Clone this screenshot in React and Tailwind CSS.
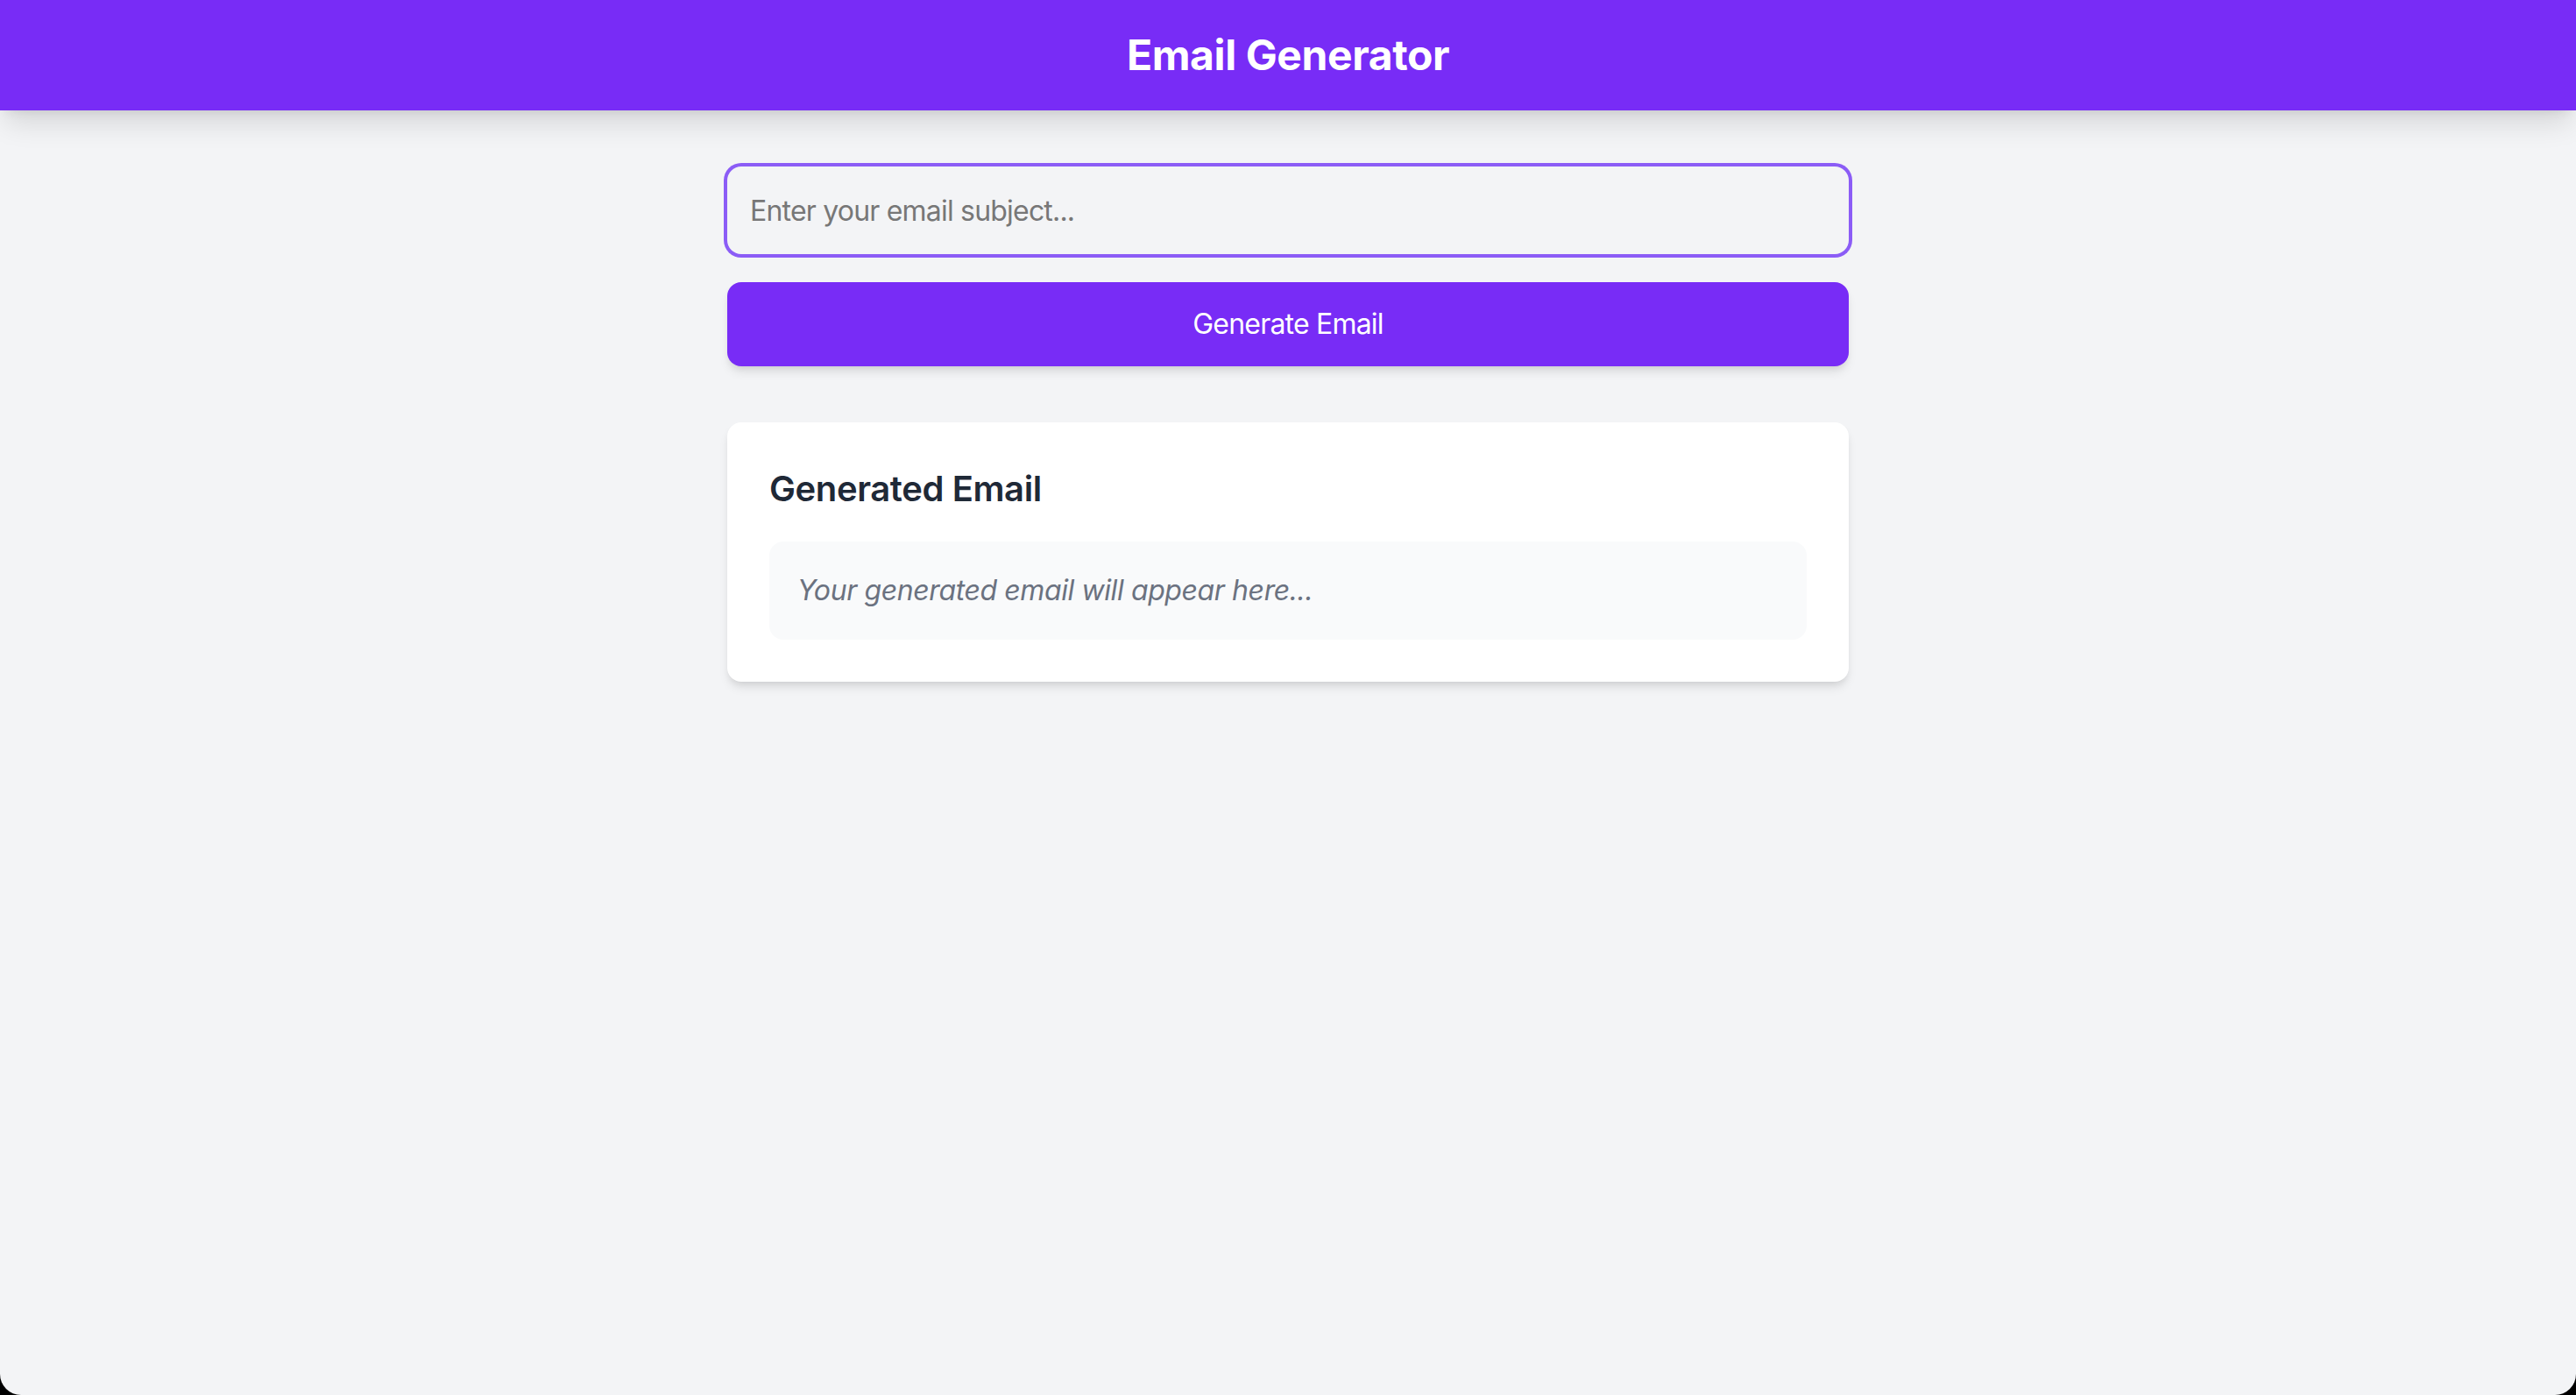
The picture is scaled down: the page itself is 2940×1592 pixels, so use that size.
import { useState } from 'react'

export default function App() {
  const [subject, setSubject] = useState('')

  return (
    <div className="min-h-screen bg-black font-['Inter','Liberation_Sans',sans-serif] tracking-[-0.025em]">
      <div className="flex h-[1592px] flex-col overflow-hidden rounded-b-[24px] bg-[#f3f4f6]">
        <header className="relative z-10 bg-[#782cf6] py-[31px] text-center shadow-[0_20px_30px_-6px_rgba(0,0,0,0.12),0_8px_12px_-8px_rgba(0,0,0,0.1)]">
          <h1 className="text-[48px] font-bold leading-[64px] text-white">Email Generator</h1>
        </header>

        <main className="mx-auto w-full max-w-[1280px] pt-[64px]">
          <div className="flex flex-col gap-[32px]">
            <input
              type="text"
              value={subject}
              onChange={(e) => setSubject(e.target.value)}
              placeholder="Enter your email subject..."
              className="h-[100px] w-full rounded-[16px] border-2 border-transparent bg-[#f3f4f6] px-[24px] text-[32px] leading-[48px] tracking-[-0.025em] text-gray-800 outline-none ring-4 ring-[#8b5cf6] placeholder:text-[#777777]"
            />
            <button
              type="button"
              className="h-[96px] w-full rounded-[16px] bg-[#782cf6] text-[32px] leading-[48px] tracking-[-0.025em] text-white shadow-[0_8px_12px_-2px_rgba(0,0,0,0.1),0_4px_8px_-4px_rgba(0,0,0,0.1)]"
            >
              Generate Email
            </button>
          </div>

          <section className="mt-[64px] rounded-[16px] bg-white p-[48px] shadow-[0_8px_12px_-2px_rgba(0,0,0,0.1),0_4px_8px_-4px_rgba(0,0,0,0.1)]">
            <h2 className="mb-[32px] text-[40px] font-semibold leading-[56px] text-[#1f2937]">Generated Email</h2>
            <div className="rounded-[16px] bg-[#f9fafb] p-[32px]">
              <p className="text-[32px] italic leading-[48px] text-[#6b7280]">Your generated email will appear here...</p>
            </div>
          </section>
        </main>
      </div>
    </div>
  )
}
